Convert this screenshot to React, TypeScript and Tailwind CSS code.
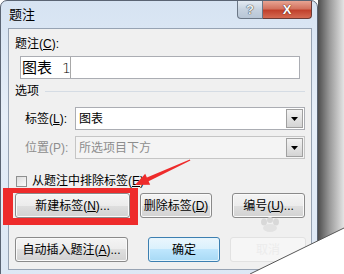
import React from "react";

function Btn({ w, children, def = false, faded = false }: { w: string; children: React.ReactNode; def?: boolean; faded?: boolean }) {
  const base =
    "h-[25px] shrink-0 rounded-[3px] border flex items-center justify-center whitespace-nowrap " +
    (def
      ? "border-[#3c7fb1] bg-[linear-gradient(#eaf6fd_0%,#d9f0fc_50%,#bee6fd_50%,#a7d9f5_100%)] shadow-[inset_0_0_0_1px_#e6f5fc]"
      : faded
      ? "border-[#e2e2e2] bg-[#f6f6f6] text-[#ececec]"
      : "border-[#8a8a8a] bg-[linear-gradient(#f4f4f4_0%,#ececec_50%,#dfdfdf_50%,#d2d2d2_100%)] shadow-[inset_0_0_0_1px_#fafafa]");
  return <div className={base + " " + w}>{children}</div>;
}

function Combo({ text, disabled = false }: { text: string; disabled?: boolean }) {
  return (
    <div
      className={
        "w-[230px] h-[23px] border flex items-stretch " +
        (disabled ? "border-[#c5c5c5] bg-[#f4f4f4] text-[#8d8d8d]" : "border-[#abadb3] bg-white text-black")
      }
    >
      <div className="flex-1 flex items-center pl-[3px]">{text}</div>
      <div className="w-[17px] m-[1px] border border-[#a0a0a0] bg-[linear-gradient(#f2f2f2,#d4d4d4)] flex items-center justify-center">
        <svg width="7" height="4" viewBox="0 0 7 4">
          <polygon points="0,0 7,0 3.5,4" fill="#000" />
        </svg>
      </div>
    </div>
  );
}

export default function App() {
  return (
    <div className="relative w-[344px] h-[274px] overflow-hidden bg-white font-['Liberation_Sans','Noto_Sans_CJK_SC',sans-serif] text-[12px] leading-[14px] text-black">
      <div className="flex h-full">
        {/* window */}
        <div className="w-[318px] h-[290px] shrink-0 flex flex-col rounded-t-[7px] border border-[#5a6473] bg-[linear-gradient(#d6e3f2,#e6eef8_40%,#dce7f4)]">
          {/* title bar */}
          <div className="h-[27px] flex items-start">
            <div className="pl-[8px] pt-[7px] text-[13px] leading-[14px]">题注</div>
            <div className="ml-auto mr-[5px] flex">
              <div className="w-[26px] h-[18px] border border-t-0 border-[#6b7786] rounded-bl-[4px] bg-[linear-gradient(#e3eaf2,#c6d2df_50%,#b8c6d6)] flex items-center justify-center">
                <span className="text-[13px] font-bold text-[#eef2f6] leading-none [text-shadow:0_0_1px_#333,0_0_1px_#333]">?</span>
              </div>
              <div className="w-[49px] h-[18px] border border-t-0 border-l-0 border-[#6b3a35] rounded-br-[4px] bg-[linear-gradient(#e8a493,#d3735f_45%,#c1412c_55%,#d46a52)] flex items-center justify-center">
                <span className="text-[13px] font-bold text-white leading-none [text-shadow:0_0_1px_#5a1d14,0_0_1px_#5a1d14]">X</span>
              </div>
            </div>
          </div>
          {/* body */}
          <div className="pl-[7px] flex">
            <div className="w-[304px] border border-[#97a3b3] bg-[#f0f0f0] pl-[6px] pr-[6px] pt-[8px] pb-[7px] flex flex-col">
              <div className="h-[14px]">
                题注(<u>C</u>):
              </div>
              <div className="mt-[5px] ml-[5px] w-[280px] h-[23px] border border-[#abadb3] bg-white flex">
                <div className="w-[50px] shrink-0 border-r border-[#a8a8a8] flex items-center pl-[1px] whitespace-nowrap">
                  <span className="text-[15px] leading-[18px]">图表</span>
                  <span className="ml-[10px] font-['DejaVu_Sans',sans-serif] font-light text-[14px] leading-[18px]">1</span>
                </div>
              </div>
              <div className="mt-[5px] h-[14px] flex items-center">
                <span>选项</span>
                <div className="flex-1 ml-[6px] h-px bg-[#d5dce4]" />
              </div>
              <div className="mt-[9px] flex items-center">
                <div className="w-[60px] pl-[10px]">
                  标签(<u>L</u>):
                </div>
                <Combo text="图表" />
              </div>
              <div className="mt-[6px] flex items-center">
                <div className="w-[60px] pl-[10px] text-[#8d8d8d]">位置(P):</div>
                <Combo text="所选项目下方" disabled />
              </div>
              <div className="mt-[15px] h-[14px] flex items-center pl-[1px]">
                <div className="w-[11px] h-[11px] border border-[#8e8f8f] bg-[linear-gradient(135deg,#dcdcdc,#fbfbfb)]" />
                <span className="ml-[5px]">
                  从题注中排除标签(<u>E</u>)
                </span>
              </div>
              <div className="mt-[5px] flex">
                <Btn w="w-[115px]">
                  新建标签(<u>N</u>)...
                </Btn>
                <div className="ml-[10px]">
                  <Btn w="w-[72px]">
                    删除标签(<u>D</u>)
                  </Btn>
                </div>
                <div className="ml-[20px]">
                  <Btn w="w-[73px]">
                    编号(<u>U</u>)...
                  </Btn>
                </div>
              </div>
              <div className="mt-[19px] flex">
                <Btn w="w-[113px]">
                  自动插入题注(<u>A</u>)...
                </Btn>
                <div className="ml-[20px]">
                  <Btn w="w-[72px]" def>
                    确定
                  </Btn>
                </div>
                <div className="ml-[10px]">
                  <Btn w="w-[76px]" faded>
                    取消
                  </Btn>
                </div>
              </div>
            </div>
          </div>
        </div>
        {/* shadow right of window */}
        <div className="flex-1 h-full bg-[linear-gradient(90deg,#4e4e4e,#9a9a9a_45%,#e4e4e4)]" />
      </div>

      {/* watermark paw */}
      <svg className="absolute left-[256px] top-[217px]" width="28" height="18" viewBox="0 0 28 18">
        <ellipse cx="8" cy="5" rx="3" ry="3.5" fill="#d8d8d8" />
        <ellipse cx="14" cy="3" rx="3" ry="3" fill="#d8d8d8" />
        <ellipse cx="20" cy="5" rx="3" ry="3.5" fill="#d8d8d8" />
        <ellipse cx="14" cy="11" rx="7" ry="4" fill="#e2e2e2" />
      </svg>

      {/* red highlight rectangle */}
      <div className="absolute left-[3px] top-[188px] w-[135px] h-[37px] border-l-[10px] border-t-[5px] border-r-[8px] border-b-[7px] border-[#ee2b2b]" />

      {/* red arrow */}
      <svg className="absolute left-0 top-0" width="344" height="274" viewBox="0 0 344 274">
        <polygon
          points="135,185 145.2,173.7 146.9,177.4 189.8,159.5 190.4,160.6 148.6,181.2 150.2,184.7"
          fill="#ee2b2b"
        />
      </svg>

      {/* page curl */}
      <svg className="absolute left-0 top-0" width="344" height="274" viewBox="0 0 344 274">
        <polygon points="250,274 344,228 344,274" fill="#ffffff" />
        <line x1="250" y1="274" x2="344" y2="228" stroke="#555" strokeWidth="1" />
      </svg>
    </div>
  );
}
